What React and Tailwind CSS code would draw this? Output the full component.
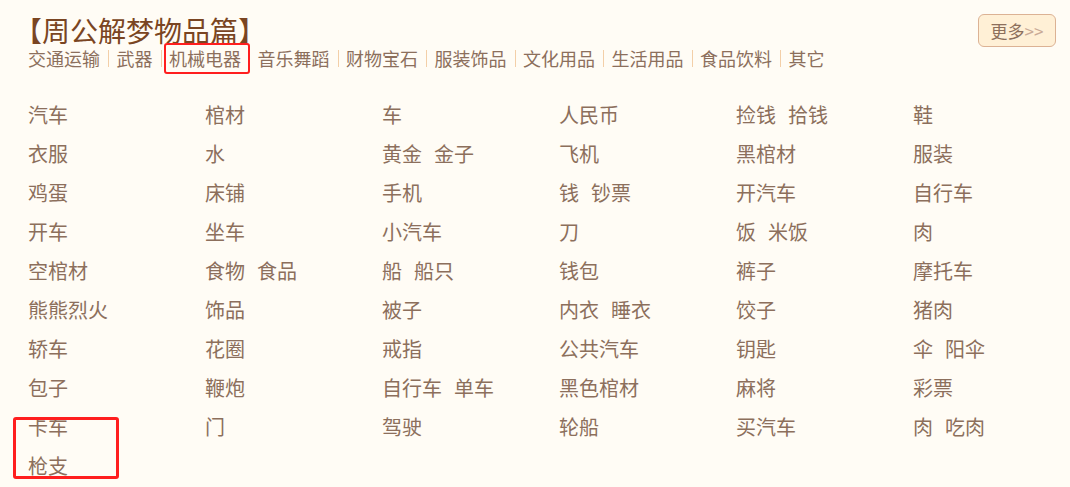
import React from "react";

const cats = ["交通运输", "武器", "机械电器", "音乐舞蹈", "财物宝石", "服装饰品", "文化用品", "生活用品", "食品饮料", "其它"];

const rows = [
  ["汽车", "棺材", "车", "人民币", "捡钱 拾钱", "鞋"],
  ["衣服", "水", "黄金 金子", "飞机", "黑棺材", "服装"],
  ["鸡蛋", "床铺", "手机", "钱 钞票", "开汽车", "自行车"],
  ["开车", "坐车", "小汽车", "刀", "饭 米饭", "肉"],
  ["空棺材", "食物 食品", "船 船只", "钱包", "裤子", "摩托车"],
  ["熊熊烈火", "饰品", "被子", "内衣 睡衣", "饺子", "猪肉"],
  ["轿车", "花圈", "戒指", "公共汽车", "钥匙", "伞 阳伞"],
  ["包子", "鞭炮", "自行车 单车", "黑色棺材", "麻将", "彩票"],
  ["卡车", "门", "驾驶", "轮船", "买汽车", "肉 吃肉"],
  ["枪支"],
];

const font = { fontFamily: '"Noto Sans CJK SC", "Noto Sans", sans-serif' };

export default function App() {
  const items = rows.flat();
  return (
    <div className="relative w-[1070px] h-[487px] overflow-hidden bg-[#fffcf5]" style={font}>
      <div className="flex items-start justify-between pl-[14px] pr-[14px] pt-[14px]">
        <div>
          <h1 className="text-[28px] leading-[32px] text-[#7a4522]">【周公解梦物品篇】</h1>
          <div className="mt-[1px] flex items-center pl-[14px] text-[18px] leading-[23px] text-[#8c6f5c]">
            {cats.map((c, i) => (
              <React.Fragment key={c}>
                {i > 0 && <span className="ml-[8px] mr-[7.5px] h-[17px] w-px bg-[#f3cfa8]" />}
                <span>{c}</span>
              </React.Fragment>
            ))}
          </div>
        </div>
        <button className="flex h-[33px] w-[78px] items-center justify-center rounded-[6px] border border-[#dcb294] bg-[#fff0d6] text-[17px] text-[#8c6f5c]">
          更多<span className="text-[#c9aa96]">&gt;&gt;</span>
        </button>
      </div>
      <div className="grid grid-cols-[repeat(6,177px)] pl-[28px] pt-[25px] text-[20px] leading-[39px] text-[#8c6f5c]">
        {items.map((t, i) => (
          <div key={i} className="flex gap-[12px] whitespace-nowrap">
            {t.split(" ").map((w, j) => (
              <span key={j}>{w}</span>
            ))}
          </div>
        ))}
      </div>
      <div className="pointer-events-none absolute left-[164px] top-[43px] h-[31px] w-[86px] rounded-[3px] border-[2px] border-[#ff1e1e]" />
      <div className="pointer-events-none absolute left-[13px] top-[417px] h-[62px] w-[106px] rounded-[3px] border-[3px] border-[#ff1e1e]" />
    </div>
  );
}
